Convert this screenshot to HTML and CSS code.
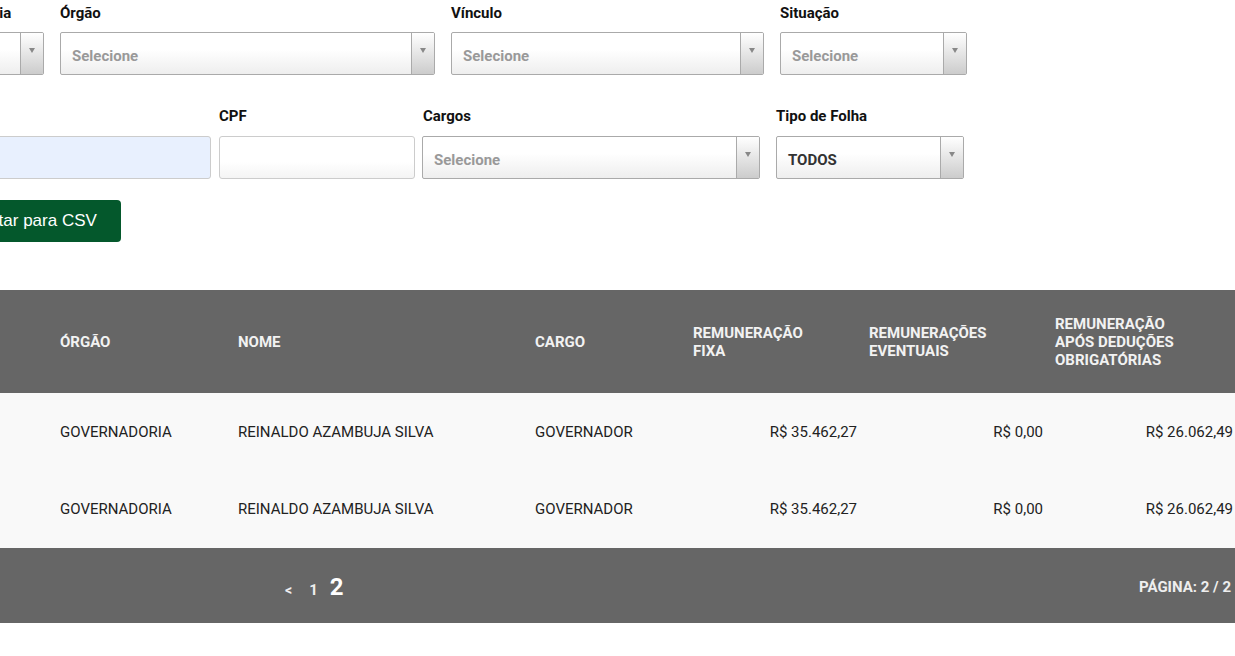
FILE: index.html
```html
<!DOCTYPE html>
<html lang="pt-BR">
<head>
  <meta charset="UTF-8">
  <meta name="viewport" content="width=device-width, initial-scale=1.0">
  <title>Folha de Pagamento</title>
  <link rel="stylesheet" href="styles.css">
</head>
<body>
  <div class="page">
    <form class="filters">
      <div class="row row-top">
        <div class="field f-competencia">
          <label>Competência</label>
          <div class="select"><span class="select-text">2018</span><span class="select-arrow"></span></div>
        </div>
        <div class="field f-orgao">
          <label>Órgão</label>
          <div class="select"><span class="select-text placeholder">Selecione</span><span class="select-arrow"></span></div>
        </div>
        <div class="field f-vinculo">
          <label>Vínculo</label>
          <div class="select"><span class="select-text placeholder">Selecione</span><span class="select-arrow"></span></div>
        </div>
        <div class="field f-situacao">
          <label>Situação</label>
          <div class="select"><span class="select-text placeholder">Selecione</span><span class="select-arrow"></span></div>
        </div>
      </div>

      <div class="row row-bottom">
        <div class="field f-nome">
          <label>Nome</label>
          <input type="text" class="text-input autofilled">
        </div>
        <div class="field f-cpf">
          <label>CPF</label>
          <input type="text" class="text-input">
        </div>
        <div class="field f-cargos">
          <label>Cargos</label>
          <div class="select"><span class="select-text placeholder">Selecione</span><span class="select-arrow"></span></div>
        </div>
        <div class="field f-tipo">
          <label>Tipo de Folha</label>
          <div class="select"><span class="select-text">TODOS</span><span class="select-arrow"></span></div>
        </div>
      </div>

      <button type="button" class="btn-export">Exportar para CSV</button>
    </form>

    <table class="payroll">
      <colgroup>
        <col class="c-mes">
        <col class="c-orgao">
        <col class="c-nome">
        <col class="c-cargo">
        <col class="c-fixa">
        <col class="c-eventuais">
        <col class="c-liquida">
      </colgroup>
      <thead>
        <tr>
          <th>Mês</th>
          <th>Órgão</th>
          <th>Nome</th>
          <th>Cargo</th>
          <th>Remuneração Fixa</th>
          <th>Remunerações Eventuais</th>
          <th>Remuneração Após Deduções Obrigatórias</th>
        </tr>
      </thead>
      <tbody>
        <tr>
          <td>10</td>
          <td>GOVERNADORIA</td>
          <td>REINALDO AZAMBUJA SILVA</td>
          <td>GOVERNADOR</td>
          <td class="num">R$ 35.462,27</td>
          <td class="num">R$ 0,00</td>
          <td class="num">R$ 26.062,49</td>
        </tr>
        <tr class="row-tall">
          <td>10</td>
          <td>GOVERNADORIA</td>
          <td>REINALDO AZAMBUJA SILVA</td>
          <td>GOVERNADOR</td>
          <td class="num">R$ 35.462,27</td>
          <td class="num">R$ 0,00</td>
          <td class="num">R$ 26.062,49</td>
        </tr>
      </tbody>
    </table>

    <div class="pager-bar">
      <div class="pager">
        <a class="pager-prev">&lt;</a>
        <a class="pager-num">1</a>
        <span class="pager-current">2</span>
      </div>
      <div class="pager-info">PÁGINA: 2 / 2</div>
    </div>
  </div>
</body>
</html>
```

FILE: styles.css
```css
body {
  margin: 0;
  font-family: Roboto, "Liberation Sans", Arial, sans-serif;
  font-size: 15px;
  color: #222;
  background: #fff;
  overflow: hidden;
}
.page {
  margin-left: -100px;
  width: 1337px;
}

/* filtros */
.row {
  display: flex;
  align-items: flex-end;
}
.row-top {
  padding-top: 5px;
  gap: 16px;
}
.row-bottom {
  margin-top: 33px;
}
.field label {
  display: block;
  font-size: 15px;
  font-weight: 700;
  line-height: 16px;
  color: #111;
  margin-bottom: 11px;
}
.row-bottom .field label {
  margin-bottom: 12px;
}
.f-competencia { margin-left: 22px; width: 122px; }
.f-orgao { width: 375px; }
.f-vinculo { width: 313px; }
.f-situacao { width: 187px; }
.f-nome { width: 311px; }
.f-cpf { width: 196px; margin-left: 8px; }
.f-cargos { width: 338px; margin-left: 7px; }
.f-cargos label { padding-left: 1px; }
.f-tipo { width: 188px; margin-left: 16px; }

.select {
  display: flex;
  height: 43px;
  box-sizing: border-box;
  border: 1px solid #aaa;
  border-radius: 2px;
  background: linear-gradient(#fff 40%, #eee);
  overflow: hidden;
}
.select-text {
  flex: 1;
  padding: 6px 0 0 11px;
  font-size: 15px;
  font-weight: 700;
  line-height: 35px;
  color: #333;
  white-space: nowrap;
  overflow: hidden;
}
.select-text.placeholder {
  color: #999;
}
.select-arrow {
  width: 23px;
  border-left: 1px solid #aaa;
  background: linear-gradient(#fff, #ccc);
  display: flex;
  justify-content: center;
  padding-top: 15px;
  box-sizing: border-box;
}
.select-arrow::after {
  content: "";
  width: 0;
  height: 0;
  border-left: 3px solid transparent;
  border-right: 3px solid transparent;
  border-top: 5px solid #888;
}

.text-input {
  display: block;
  width: 100%;
  height: 43px;
  box-sizing: border-box;
  margin: 0;
  border: 1px solid #ccc;
  border-radius: 3px;
  background: linear-gradient(#fff 60%, #f4f4f4);
  font: inherit;
}
.text-input.autofilled {
  background: #e8f0fe;
}

.btn-export {
  display: block;
  margin: 21px 0 0 30px;
  width: 191px;
  height: 42px;
  padding: 0;
  border: none;
  border-radius: 4px;
  background: #04582c;
  color: #fff;
  font-family: "Liberation Sans", Arial, sans-serif;
  font-size: 17px;
  cursor: pointer;
}

/* tabela */
.payroll {
  margin-top: 48px;
  width: 1337px;
  border-collapse: collapse;
  table-layout: fixed;
}
.c-mes { width: 152px; }
.c-orgao { width: 178px; }
.c-nome { width: 297px; }
.c-cargo { width: 158px; }
.c-fixa { width: 176px; }
.c-eventuais { width: 186px; }
.c-liquida { width: 190px; }

.payroll th {
  height: 103px;
  padding: 0 36px 0 8px;
  background: #666;
  color: #f2f2f2;
  font-size: 15px;
  font-weight: 700;
  line-height: 18px;
  text-align: left;
  text-transform: uppercase;
}
.payroll td {
  height: 77px;
  padding: 0 8px;
  background: #f9f9f9;
  font-size: 15px;
  color: #222;
}
.payroll .row-tall td {
  height: 78px;
}
.payroll td.num {
  text-align: right;
  padding-right: 4px;
}

.pager-bar {
  display: flex;
  justify-content: space-between;
  align-items: center;
  height: 75px;
  padding: 2px 6px 0 385px;
  box-sizing: border-box;
  background: #666;
  color: #eee;
  font-weight: 700;
}
.pager {
  display: flex;
  align-items: baseline;
}
.pager-prev {
  font-size: 14px;
}
.pager-num {
  font-size: 15px;
  margin-left: 17px;
}
.pager-current {
  font-size: 24px;
  color: #fff;
  margin-left: 12px;
}
.pager-info {
  font-size: 15px;
}
```
